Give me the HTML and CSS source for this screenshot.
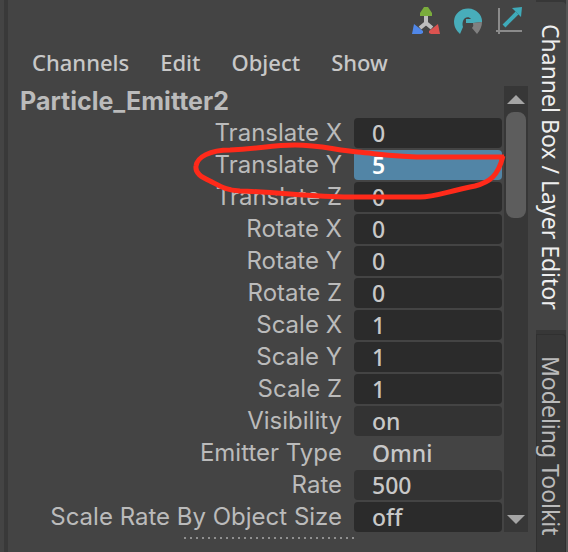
FILE: index.html
```html
<!DOCTYPE html>
<html lang="en">
<head>
<meta charset="utf-8">
<title>Channel Box</title>
<link rel="stylesheet" href="styles.css">
</head>
<body>
<div class="dock">
  <main class="panel">
    <div class="toolbar">
      <button class="tool" aria-label="Manipulator">
        <svg viewBox="0 0 28 28" width="28" height="28"><path d="M14 9v8M14 16l-6 5M14 16l6 5" stroke="#bdbdbd" stroke-width="4" fill="none"/><path d="M12 0H16L20 6V9H8V6Z" fill="#7aac3c"/><path d="M2 17L11 24V26L9 27H0Z" fill="#5087e8"/><path d="M26 17L17 24V26L19 27H28Z" fill="#dc5350"/></svg>
      </button>
      <button class="tool" aria-label="Speed">
        <svg viewBox="0 0 28 28" width="28" height="28"><path d="M6 27C2 23 0 20 0 14A14 13 0 0 1 28 15L19 16H12V12H17C15 9 10 10 9 14Q8 17 9 20Z" fill="#48adba"/><path d="M19 16L28 15Q28 21 23 27L18 21Q20 19 19 16Z" fill="#808080"/></svg>
      </button>
      <button class="tool" aria-label="Hyperbolic">
        <svg viewBox="0 0 28 28" width="28" height="28"><path d="M3 1V27M0 24H26" stroke="#8b8b8b" stroke-width="2" fill="none"/><path d="M8 19L21 6" stroke="#3faab9" stroke-width="4"/><path d="M16 1L26 0L25 10Z" fill="#3faab9"/></svg>
      </button>
    </div>
    <nav class="menu">
      <button>Channels</button><button>Edit</button><button>Object</button><button>Show</button>
    </nav>
    <div class="content">
      <div class="sheet">
        <h1 class="node">Particle_Emitter2</h1>
        <form class="rows">
          <label for="tx">Translate X</label><input id="tx" value="0">
          <label for="ty">Translate Y</label><input id="ty" class="selected" value="5">
          <label for="tz">Translate Z</label><input id="tz" value="0">
          <label for="rx">Rotate X</label><input id="rx" value="0">
          <label for="ry">Rotate Y</label><input id="ry" value="0">
          <label for="rz">Rotate Z</label><input id="rz" value="0">
          <label for="sx">Scale X</label><input id="sx" value="1">
          <label for="sy">Scale Y</label><input id="sy" value="1">
          <label for="sz">Scale Z</label><input id="sz" value="1">
          <label for="vis">Visibility</label><input id="vis" class="soft" value="on">
          <label for="type">Emitter Type</label><input id="type" class="plain" value="Omni">
          <label for="rate">Rate</label><input id="rate" class="soft" value="500">
          <label for="size">Scale Rate By Object Size</label><input id="size" value="off">
        </form>
      </div>
      <div class="scrollbar">
        <button aria-label="Scroll up"><svg viewBox="0 0 18 9" width="18" height="9"><path d="M9 0L18 9H0Z" fill="#a5a5a5"/></svg></button>
        <div class="track"><div class="thumb"></div></div>
        <button aria-label="Scroll down"><svg viewBox="0 0 18 9" width="18" height="9"><path d="M0 0H18L9 9Z" fill="#a5a5a5"/></svg></button>
      </div>
    </div>
    <div class="grip"><svg width="172" height="2"><path d="M1 1H172" stroke="#909090" stroke-width="2" stroke-dasharray="2 4"/></svg></div>
    <svg class="markup" viewBox="0 0 320 60" width="320" height="60"><path d="M314 15H240C205 15 190 12 168 10C145 8 130 3 105 3C80 3 70 7 40 8C20 8 7 15 6 24C5 31 11 35 20 39C30 44 35 48 50 49C90 50 120 55 160 55H230C245 55 255 50 285 44C300 40 308 34 313 14" fill="none" stroke="#ff2a1a" stroke-width="5" stroke-linejoin="round"/></svg>
  </main>
  <div class="tabs">
    <button class="tab active">Channel Box / Layer Editor</button>
    <button class="tab">Modeling Toolkit</button>
  </div>
</div>
</body>
</html>
```
FILE: styles.css
```css
* { box-sizing: border-box; }
body { margin: 0; background: #444; color: #c8c8c8; font-family: "Noto Sans", sans-serif; }
button { margin: 0; padding: 0; border: 0; background: none; color: inherit; font: inherit; }
svg { display: block; }
.dock { display: flex; height: 100vh; min-height: 552px; overflow: hidden; padding-left: 4px; }
.panel { position: relative; flex: 1; min-width: 0; border-left: 4px solid #393939; }
.toolbar { display: flex; justify-content: flex-end; gap: 14px; padding: 7px 12px 0 0; height: 46px; }
.tool { height: 28px; }
.menu { display: flex; gap: 31px; height: 40px; padding: 0 24px; font-size: 22px; font-weight: 500; line-height: 32px; }
.menu button { height: 32px; }
.content { display: flex; gap: 2px; padding-right: 8px; }
.sheet { flex: 1; min-width: 0; }
.node { margin: 0; padding-left: 12px; height: 32px; color: #bbb; font: 700 25px/30px Inter, sans-serif; }
.rows { display: grid; grid-template-columns: 1fr 148px; column-gap: 12px; row-gap: 2px; }
.rows label { color: #bbb; text-align: right; font: 400 24px/30px Inter, sans-serif; white-space: nowrap; }
.rows input { width: 100%; height: 30px; margin: 0; padding: 0 18px; border: 0; border-radius: 4px; background: #2b2b2b; color: #c8c8c8; font: 500 23px/30px "Noto Sans", sans-serif; }
.rows .selected { background: #5285a6; color: #fff; font-weight: 600; }
.rows .soft { background: #333; }
.rows .plain { background: transparent; }
.scrollbar { display: flex; flex-direction: column; width: 24px; background: #373737; }
.scrollbar button { display: flex; align-items: center; justify-content: center; height: 26px; }
.track { flex: 1; padding: 0 2px; }
.thumb { height: 106px; border-radius: 8px; background: #5d5d5d; }
.grip { display: flex; justify-content: flex-end; padding: 5px 181px 0 0; }
.markup { position: absolute; left: 182px; top: 142px; pointer-events: none; }
.tabs { display: flex; flex-direction: column; gap: 4px; width: 32px; padding-top: 2px; background: #373737; border-right: 2px solid #555; }
.tab { writing-mode: vertical-rl; padding: 21px 0; font-size: 23px; line-height: 22px; text-align: left; white-space: nowrap; background: #383838; border: 1px solid #303030; border-width: 1px 1px 0 1px; border-radius: 0 4px 0 0; color: #bbb; }
.tab.active { height: 328px; flex: none; background: #444; border-color: #444; color: #eee; }
.tab:last-child { flex: 1; }
```
